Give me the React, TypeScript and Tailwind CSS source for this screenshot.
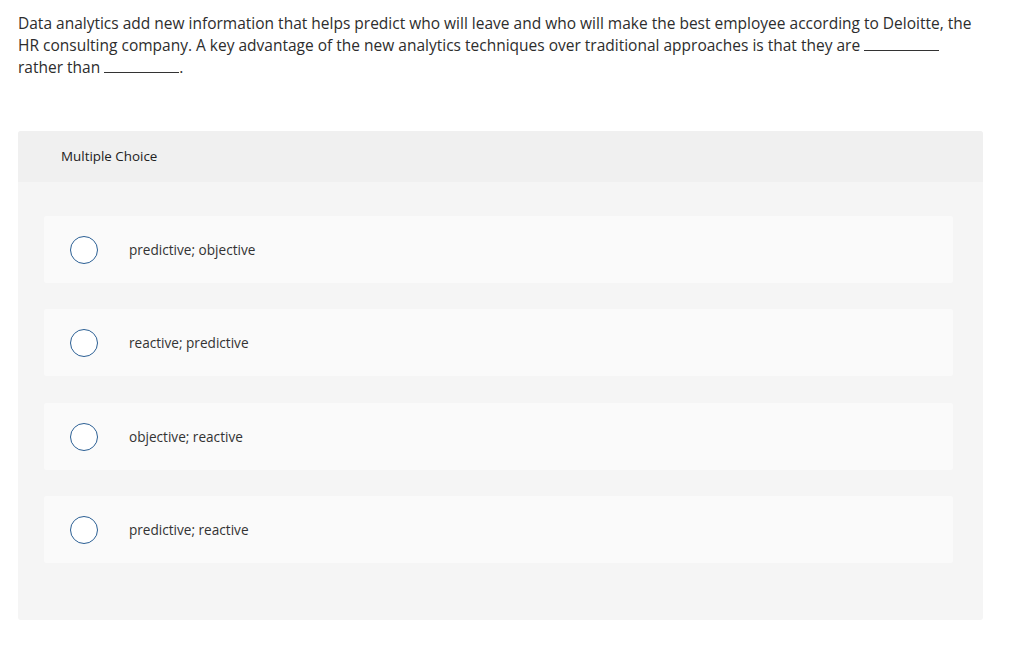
const options = [
  "predictive; objective",
  "reactive; predictive",
  "objective; reactive",
  "predictive; reactive",
];

function Blank() {
  return <span className="inline-block w-[75px] h-[15px] border-b border-[#333] align-baseline" />;
}

export default function App() {
  return (
    <main className="bg-white min-h-[662px] pl-[18px] pr-[41px] pt-[12px] text-[#2d2d2d] font-['Open_Sans',sans-serif]">
      <p className="text-[15.5px] leading-[22px] pr-[8px]">
        Data analytics add new information that helps predict who will leave and who will make the best
        employee according to Deloitte, the HR consulting company. A key advantage of the new analytics
        techniques over traditional approaches is that they are <Blank /> rather than <Blank />.
      </p>

      <section className="mt-[53px] rounded-[3px] bg-[#f5f5f5] overflow-hidden">
        <div className="h-[51px] bg-[#f0f0f0] flex items-center pl-[43px] text-[13.4px] text-[#222]">
          Multiple Choice
        </div>
        <div className="flex flex-col gap-[26.4px] pl-[26px] pr-[30px] pt-[34px] pb-[57px]">
          {options.map((o) => (
            <label
              key={o}
              className="h-[67px] rounded-[2px] bg-[#fafafa] flex items-center pl-[26px] pt-[1px] cursor-pointer"
            >
              <span className="w-[28px] h-[28px] rounded-full border-[1.5px] border-[#2b5f94] bg-white shrink-0" />
              <span className="ml-[31px] text-[13.6px] text-[#333]">{o}</span>
            </label>
          ))}
        </div>
      </section>
    </main>
  );
}
